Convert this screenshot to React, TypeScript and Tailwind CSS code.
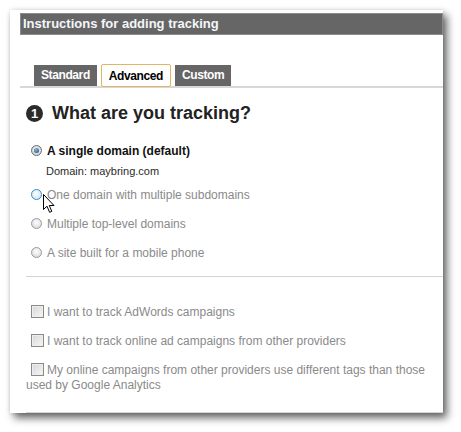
const font = "font-['Liberation_Sans',Arial,sans-serif]";

const radios = [
  { label: "A single domain (default)", checked: true },
  { label: "One domain with multiple subdomains", hover: true },
  { label: "Multiple top-level domains" },
  { label: "A site built for a mobile phone" },
];

const checks = [
  "I want to track AdWords campaigns",
  "I want to track online ad campaigns from other providers",
  "My online campaigns from other providers use different tags than those used by Google Analytics",
];

const Radio = ({ checked, hover }: { checked?: boolean; hover?: boolean }) => {
  if (checked) {
    return (
      <span className="mt-[1px] w-[11px] h-[11px] shrink-0 rounded-full border border-[#6b6b6b] bg-[radial-gradient(circle_at_50%_40%,#f4f4f4,#c9c9c9)] flex items-center justify-center">
        <span className="w-[5px] h-[5px] rounded-full bg-[radial-gradient(circle_at_40%_35%,#7fc0ee,#0f3f74)]" />
      </span>
    );
  }
  if (hover) {
    return (
      <span className="mt-[1px] w-[11px] h-[11px] shrink-0 rounded-full border border-[#3d8ac4] bg-[radial-gradient(circle_at_45%_40%,#ffffff,#bfe0f5)]" />
    );
  }
  return (
    <span className="mt-[1px] w-[11px] h-[11px] shrink-0 rounded-full border border-[#9a9a9a] bg-[radial-gradient(circle_at_50%_40%,#ffffff,#d2d2d2)]" />
  );
};

const Checkbox = () => (
  <span className="inline-block align-[-2px] ml-[5px] mr-[3px] w-[13px] h-[13px] border border-[#8a8a8a] bg-[linear-gradient(135deg,#d6d6d6,#f7f7f7)] shadow-[inset_0_0_0_1px_#eeeeee]" />
);

const App = () => {
  return (
    <div className={`${font} relative w-[461px] h-[432px] bg-white pt-[10px] pl-[10px]`}>

      {/* Panel */}
      <div className="w-[433px] h-[403px] bg-white pt-[3px] pl-[10px] shadow-[4px_5px_8px_rgba(0,0,0,0.6),0_0_4px_rgba(0,0,0,0.12)]">

        {/* Title bar */}
        <div className="h-[22px] border border-[#8c8c8c] bg-[#666666] px-[2px] text-[13px] leading-[20px] font-bold text-[#f4f6fa]">
          Instructions for adding tracking
        </div>

        {/* Tabs */}
        <div className="mt-[29px] flex items-end gap-[4px] pl-[14px] text-[12px] font-bold tracking-[-0.4px]">
          <div className="h-[21px] leading-[21px] px-[7px] bg-[#666666] text-white">Standard</div>
          <div className="relative z-10 -mb-[1px] h-[23px] leading-[22px] px-[7px] bg-white text-black border border-[#e3b463] rounded-[2px]">Advanced</div>
          <div className="h-[21px] leading-[21px] px-[7px] bg-[#666666] text-white">Custom</div>
        </div>
        <div className="h-[2px] bg-[#d8d8d8]" />

        {/* Content */}
        <div className="pl-[6px]">

          {/* Heading */}
          <div className="mt-[14px] flex items-center gap-[9px] h-[22px]">
            <span className="w-[17px] h-[17px] rounded-full bg-[#2b2b2b] text-white text-[13px] font-bold leading-[17px] text-center">1</span>
            <h2 className="text-[18px] leading-[22px] font-bold text-[#222222]">What are you tracking?</h2>
          </div>

          {/* Radios */}
          <div className="mt-[20px] pl-[5px] flex flex-col">
            {
              radios.map((r, i) => (
                <div key={i} className={i == 0 ? '' : i == 1 ? 'mt-[10px]' : 'mt-[14px]'}>
                  <div className="flex items-start gap-[5px] text-[12px] leading-[15px]">
                    <Radio checked={r.checked} hover={r.hover} />
                    <span className={r.checked ? 'font-bold text-[#111111]' : 'text-[#8a8a8a]'}>{r.label}</span>
                  </div>
                  {
                    r.checked &&
                    <p className="mt-[5px] pl-[15px] text-[11px] leading-[14px] text-[#2a2a2a]">Domain: maybring.com</p>
                  }
                </div>
              ))
            }
          </div>

          <div className="mt-[15px] h-px bg-[#d4d4d4]" />

          {/* Checkboxes */}
          <div className="mt-[28px] flex flex-col gap-[14px] pr-[6px]">
            {
              checks.map((c, i) => (
                <p key={i} className="text-[12px] leading-[15px] text-[#8a8a8a]">
                  <Checkbox />{c}
                </p>
              ))
            }
          </div>

          <div className="mt-[19px] h-px bg-[#d4d4d4]" />
        </div>
      </div>

      {/* Mouse cursor */}
      <svg className="absolute left-[43px] top-[194px]" width="13" height="20" viewBox="0 0 13 20">
        <path d="M0.5 0.5 L0.5 15.5 L4 12.2 L6.6 18.3 L8.8 17.4 L6.3 11.5 L11 11.5 Z" fill="#ffffff" stroke="#000000" strokeWidth="1" strokeLinejoin="miter" />
      </svg>
    </div>
  );
};

export default App;
